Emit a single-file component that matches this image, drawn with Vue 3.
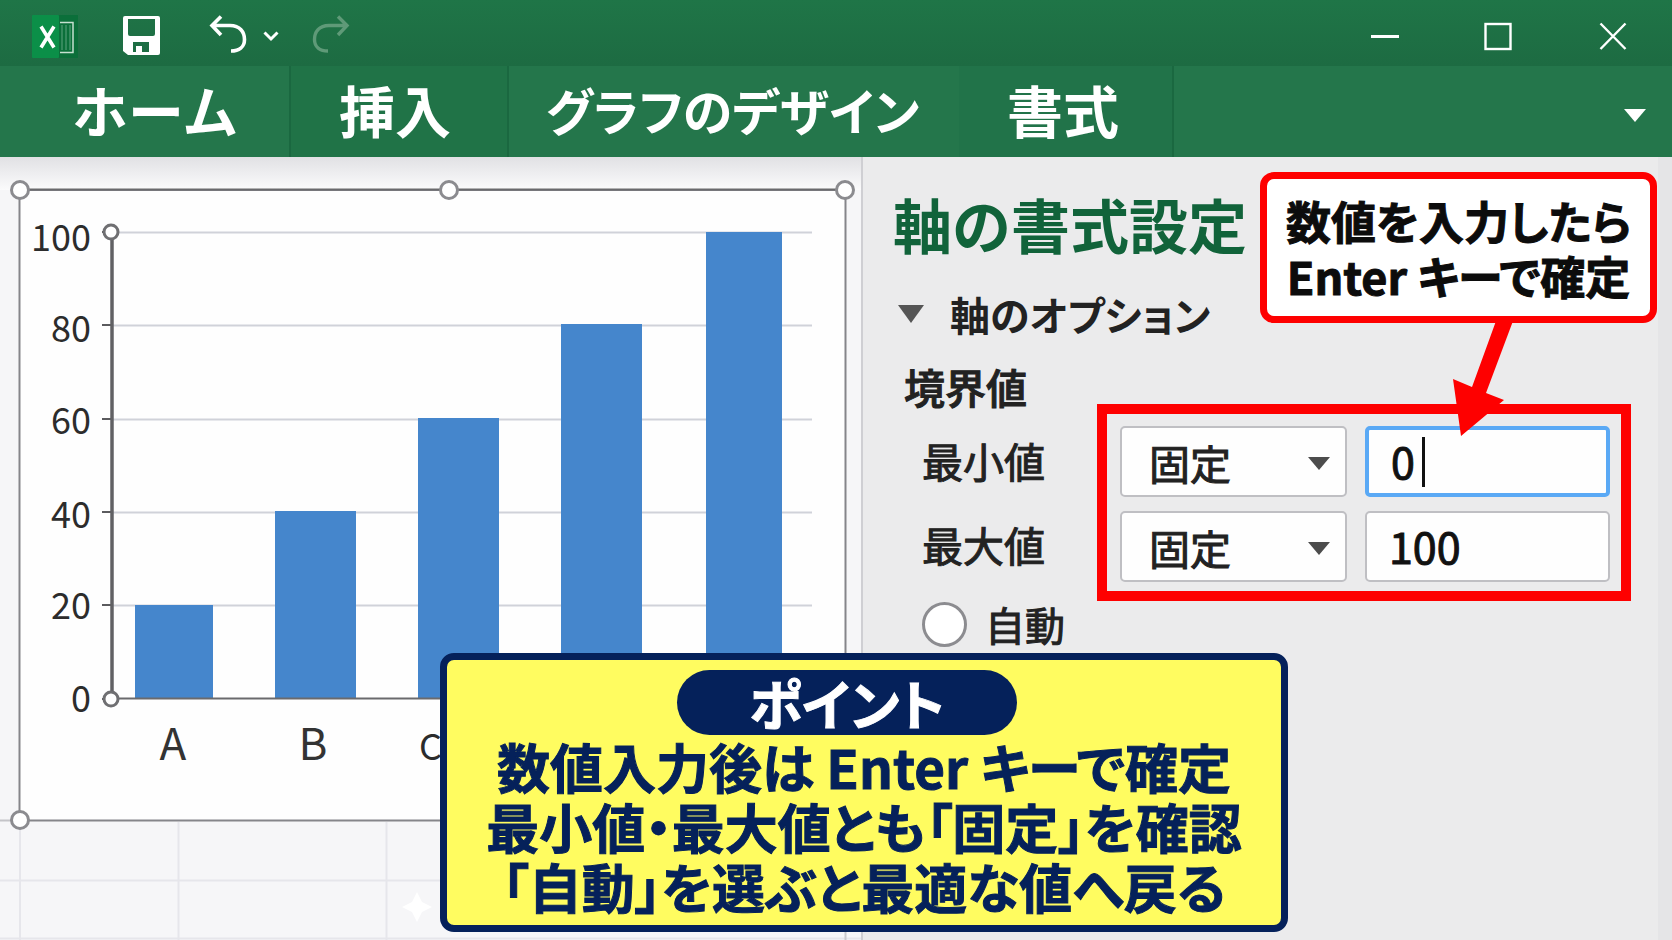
<script setup>
import { ref } from 'vue'

const tabs = [
  { name: 'home', label: 'ホーム' },
  { name: 'insert', label: '挿入' },
  { name: 'design', label: 'グラフのデザイン' },
  { name: 'format', label: '書式' },
]

const ticks = [
  { value: 100, y: 232, base: 251 },
  { value: 80, y: 325, base: 342 },
  { value: 60, y: 419, base: 434 },
  { value: 40, y: 512, base: 528 },
  { value: 20, y: 605, base: 619 },
  { value: 0, y: 699, base: 712 },
]

const bars = [
  { x: 135, width: 78, top: 605 },
  { x: 275, width: 81, top: 511 },
  { x: 418, width: 81, top: 418 },
  { x: 561, width: 81, top: 324 },
  { x: 706, width: 76, top: 232 },
]

const handles = [[20, 190], [449, 190], [845, 190], [20, 820]]

const minMode = ref('固定')
const maxMode = ref('固定')
const minValue = ref('0')
const maxValue = ref('100')
</script>

<template>
  <div class="app">
    <header class="titlebar">
      <div class="quick">
        <svg class="logo" width="100" height="66" viewBox="0 0 100 66" role="img" aria-label="Excel">
          <rect x="58" y="15" width="20" height="43" fill="#0b6f3a" />
          <path d="M60 22.500h13v30H60" fill="none" stroke="#c5e0d0" stroke-width="1.500" />
          <path d="M62 25v25M66 25v25M70 25v25" fill="none" stroke="#5fa57e" stroke-width="1" />
          <rect x="32" y="15" width="27" height="43" rx="1" fill="#0b8f48" />
          <path d="M41 26.500L54 47.500M54 26.500L41 47.500" fill="none" stroke="#fff" stroke-width="3.600" />
        </svg>
        <button class="icon-btn" aria-label="上書き保存">
          <svg width="82" height="66" viewBox="100 0 82 66">
            <path fill-rule="evenodd" fill="#fff" d="M125 16h33q2 0 2 2v35q0 2-2 2h-30l-5-4V18q0-2 2-2zM128 19v15q0 2 2 2h23q2 0 2-2V19zM133 42v10h3v-6h6v6h7V42z" />
          </svg>
        </button>
        <button class="icon-btn" aria-label="元に戻す">
          <svg width="72" height="66" viewBox="182 0 72 66" fill="none" stroke="#fff" stroke-width="3.600">
            <path d="M221 16.500L212 25.500L221 35M212.500 25.500H230C240 25.500 244.500 32 244.500 39.500C244.500 47 239 51 231 51" />
          </svg>
        </button>
        <button class="icon-btn" aria-label="元に戻すの履歴">
          <svg width="40" height="66" viewBox="254 0 40 66" fill="none" stroke="#fff" stroke-width="3">
            <path d="M264.500 32.500L271 39L277.500 32.500" />
          </svg>
        </button>
        <button class="icon-btn" aria-label="やり直し">
          <svg width="70" height="66" viewBox="294 0 70 66" fill="none" stroke="#5f9a78" stroke-width="3.400">
            <path d="M338 16.500L347 25.500L338 35M346.500 25.500H329C319 25.500 314.500 32 314.500 39.500C314.500 47 320 51 328 51" />
          </svg>
        </button>
      </div>
      <div class="window-buttons">
        <button class="icon-btn" aria-label="最小化">
          <svg width="107" height="66" viewBox="1331 0 107 66"><path d="M1371 36.500h28" stroke="#fff" stroke-width="3" /></svg>
        </button>
        <button class="icon-btn" aria-label="最大化">
          <svg width="122" height="66" viewBox="1438 0 122 66"><rect x="1485.500" y="24" width="25" height="25" fill="none" stroke="#fff" stroke-width="2.400" /></svg>
        </button>
        <button class="icon-btn" aria-label="閉じる">
          <svg width="112" height="66" viewBox="1560 0 112 66"><path d="M1600.500 23.500l25 25.500M1625.500 23.500l-25 25.500" stroke="#fff" stroke-width="2.400" /></svg>
        </button>
      </div>
    </header>

    <nav class="tabs">
      <button v-for="t in tabs" :key="t.name" class="tab" :class="t.name">{{ t.label }}</button>
      <button class="tab more" aria-label="リボンの表示オプション">
        <svg width="22" height="13" viewBox="0 0 22 13"><path d="M0 0h22L11 13z" fill="#fff" /></svg>
      </button>
    </nav>

    <main class="body">
      <section class="sheet">
        <svg class="chart" viewBox="0 157 861 783" role="img" aria-label="縦棒グラフ">
          <defs>
            <linearGradient id="shade" x1="0" y1="0" x2="0" y2="1">
              <stop offset="0" stop-color="#e1e1e4" />
              <stop offset="1" stop-color="#fbfbfc" />
            </linearGradient>
          </defs>
          <rect x="0" y="157" width="861" height="783" fill="#f6f6f8" />
          <rect x="0" y="157" width="861" height="33" fill="url(#shade)" />
          <path d="M20 822V940M178.500 822V940M386.500 822V940M0 880.500H861M0 938.500H861" stroke="#e6e6eb" stroke-width="2" fill="none" />
          <path d="M0 820.500H20" stroke="#c4c4c8" stroke-width="2" />
          <path d="M417 892l5 10 10 5-10 5-5 10-5-10-10-5 10-5z" fill="#fff" />
          <path d="M845.500 820V940" stroke="#c9c9cd" stroke-width="2" />
          <rect x="19.500" y="190" width="826" height="630.500" fill="#fefefe" stroke="#85858a" stroke-width="2" />
          <path d="M20 189.500H845" stroke="#6a6a6d" stroke-width="2" />
          <g v-for="t in ticks" :key="t.value">
            <path v-if="t.value" :d="`M111 ${t.y + .5}H812`" stroke="#d0d2d9" stroke-width="2" />
            <path :d="`M102 ${t.y}H112`" stroke="#5b5b5e" stroke-width="2" />
            <text class="tick" x="91" :y="t.base" text-anchor="end">{{ t.value }}</text>
          </g>
          <rect v-for="b in bars" :key="b.x" :x="b.x" :y="b.top" :width="b.width" :height="698 - b.top" fill="#4586cc" />
          <path d="M112 698.500H812" stroke="#6a6a6d" stroke-width="2" />
          <path d="M112 232V698" stroke="#616164" stroke-width="3.500" />
          <circle cx="111" cy="232" r="7" class="handle" />
          <circle cx="111" cy="699" r="7" class="handle" />
          <circle v-for="h in handles" :key="h.join()" :cx="h[0]" :cy="h[1]" r="8.500" class="handle outer" />
          <text class="category" x="173" y="760" text-anchor="middle">A</text>
          <text class="category" x="313" y="760" text-anchor="middle">B</text>
          <text class="tick" x="419" y="760">C</text>
        </svg>
      </section>

      <aside class="pane">
        <h1 class="pane-title">軸の書式設定</h1>
        <button class="section-toggle" aria-expanded="true">
          <svg width="26" height="18" viewBox="0 0 26 18"><path d="M0 0h26L13 18z" fill="#555" /></svg>
          <span>軸のオプション</span>
        </button>

        <div class="bounds">
          <div class="labels">
            <h2 class="bounds-title">境界値</h2>
            <label class="row-label" for="min-value">最小値</label>
            <label class="row-label" for="max-value">最大値</label>
          </div>
          <div class="frame">
            <div class="field">
              <select v-model="minMode" aria-label="最小値の種類"><option>固定</option></select>
              <svg class="arrow-down" width="22" height="13" viewBox="0 0 22 13"><path d="M0 0h22L11 13z" fill="#4c4c4c" /></svg>
            </div>
            <div class="field">
              <input id="min-value" v-model="minValue" class="active" type="text" />
              <span class="caret"></span>
            </div>
            <div class="field">
              <select v-model="maxMode" aria-label="最大値の種類"><option>固定</option></select>
              <svg class="arrow-down" width="22" height="13" viewBox="0 0 22 13"><path d="M0 0h22L11 13z" fill="#4c4c4c" /></svg>
            </div>
            <div class="field">
              <input id="max-value" v-model="maxValue" type="text" />
            </div>
          </div>
        </div>

        <label class="auto"><input type="radio" name="auto" />自動</label>
      </aside>
    </main>

    <div class="callout">
      <p class="callout-text">数値を入力したら<br />Enter キーで確定</p>
      <svg class="callout-arrow" viewBox="0 0 397 116" width="397" height="116">
        <path d="M236 -2H253L226 70L244 77L201 113L193 56L212 64Z" fill="#fe0000" />
      </svg>
    </div>

    <section class="point">
      <h2 class="point-title">ポイント</h2>
      <p>数値入力後は Enter キーで確定</p>
      <p>最小値・最大値とも「固定」を確認</p>
      <p>「自動」を選ぶと最適な値へ戻る</p>
    </section>
  </div>
</template>

<style>
body {
  margin: 0;
}
</style>

<style scoped>
.app {
  position: relative;
  display: flex;
  flex-direction: column;
  min-height: 100vh;
  overflow: hidden;
  background: #ebebec;
  color: #222;
  font-family: "Noto Sans CJK JP", "Noto Sans", sans-serif;
}
h1, h2, p {
  margin: 0;
}
button, input, select {
  margin: 0;
  border: 0;
  font: inherit;
  color: inherit;
}
svg {
  display: block;
}
.titlebar {
  display: flex;
  justify-content: space-between;
  background: linear-gradient(#1f7547, #1d6b42);
}
.quick, .window-buttons {
  display: flex;
}
.icon-btn {
  padding: 0;
  background: none;
}
.tabs {
  display: flex;
  height: 91px;
  background: #25774d;
}
.tab {
  box-sizing: border-box;
  padding: 0 0 6px;
  background: #24764b;
  border-right: 2px solid #1a6840;
  color: #fff;
  font-size: 56px;
  font-weight: 700;
  line-height: 84px;
  text-align: left;
  white-space: nowrap;
}
.home {
  width: 291px;
  padding-left: 72px;
}
.insert {
  width: 218px;
  padding-left: 48px;
  background: #207347;
}
.design {
  width: 452px;
  padding-left: 37px;
  border-right-color: #217349;
  font-size: 50px;
  font-feature-settings: "palt";
}
.format {
  width: 213px;
  padding-left: 46px;
  background: #217349;
}
.more {
  display: flex;
  flex: 1;
  align-items: center;
  justify-content: flex-end;
  padding: 8px 26px 0 0;
  border: 0;
}
.body {
  display: grid;
  flex: 1;
  grid-template-columns: 861fr 811fr;
}
.sheet {
  min-width: 0;
  background: #f6f6f8;
}
.chart {
  width: 100%;
  height: auto;
}
.tick {
  fill: #2c2c2c;
  font-size: 36px;
}
.category {
  fill: #333;
  font-size: 44px;
}
.handle {
  fill: #fff;
  stroke: #6f6f72;
  stroke-width: 3px;
}
.outer {
  stroke: #8b8b8f;
}
.pane {
  box-sizing: border-box;
  padding: 27px 27px 0 30px;
  border-left: 2px solid #cfcfd3;
  border-right: 14px solid #e5e5e7;
  background: #ebebec;
}
.pane-title {
  color: #11633a;
  font-size: 59px;
  line-height: 80px;
}
.section-toggle {
  display: flex;
  align-items: center;
  gap: 26px;
  margin-top: 20px;
  padding: 0 0 0 5px;
  background: none;
  font-size: 40px;
  font-weight: 700;
  line-height: 60px;
  font-feature-settings: "palt";
}
.bounds {
  display: grid;
  grid-template-columns: 204px 1fr;
  margin-top: 17px;
}
.bounds-title {
  padding-left: 11px;
  font-size: 41px;
  font-weight: 500;
  line-height: 50px;
  -webkit-text-stroke: 1px;
}
.labels {
  display: flex;
  flex-direction: column;
  gap: 14px;
}
.row-label {
  padding-left: 29px;
  font-size: 41px;
  line-height: 70px;
  -webkit-text-stroke: 1px;
}
.frame {
  display: grid;
  grid-template-columns: 227fr 245fr;
  gap: 14px 18px;
  align-self: start;
  margin-top: 43px;
  padding: 12px 11px 9px 13px;
  border: 10px solid #fe0000;
}
.field {
  position: relative;
}
.field select, .field input {
  box-sizing: border-box;
  display: block;
  width: 100%;
  height: 71px;
  border: 2px solid #bfbfc3;
  border-radius: 5px;
  outline: 0;
  background: #fefefe;
  appearance: none;
}
.field select {
  padding: 0 60px 0 27px;
  font-size: 41px;
  -webkit-text-stroke: 1px;
}
.field input {
  padding: 0 20px 3px 22px;
  color: #111;
  font-size: 43px;
  -webkit-text-stroke: 1px;
}
.field input.active {
  border: 4px solid #5aa9f5;
}
.arrow-down {
  position: absolute;
  top: 31px;
  right: 17px;
  pointer-events: none;
}
.caret {
  position: absolute;
  top: 11px;
  left: 57px;
  width: 3px;
  height: 50px;
  background: #111;
}
.auto {
  display: flex;
  align-items: center;
  gap: 18px;
  padding-left: 29px;
  font-size: 40px;
  line-height: 46px;
  -webkit-text-stroke: 1px;
}
.auto input {
  box-sizing: border-box;
  width: 45px;
  height: 45px;
  border: 3px solid #8c8c90;
  border-radius: 50%;
  background: #fff;
  appearance: none;
}
.callout {
  position: absolute;
  top: 172px;
  right: 15px;
  width: 397px;
}
.callout-text {
  padding: 14px 0 13px;
  border: 7px solid #fe0000;
  border-radius: 14px;
  background: #fff;
  color: #0c0c0c;
  font-size: 45px;
  font-weight: 700;
  line-height: 55px;
  text-align: center;
  font-feature-settings: "palt";
  -webkit-text-stroke: 1px;
}
.callout-arrow {
  overflow: visible;
}
.point {
  position: absolute;
  top: 653px;
  right: 384px;
  left: 440px;
  display: flex;
  flex-direction: column;
  align-items: center;
  padding: 10px 0 9px;
  border: 7px solid #05215a;
  border-radius: 14px;
  background: #fffc60;
  color: #05215a;
  font-size: 53px;
  font-weight: 700;
  line-height: 60px;
  white-space: nowrap;
  font-feature-settings: "palt";
  -webkit-text-stroke: 1px;
}
.point-title {
  box-sizing: border-box;
  width: 340px;
  margin: 0 34px 1px 0;
  border-radius: 33px;
  background: #05215a;
  color: #fff;
  font-size: 54px;
  line-height: 65px;
  text-align: center;
}
</style>
